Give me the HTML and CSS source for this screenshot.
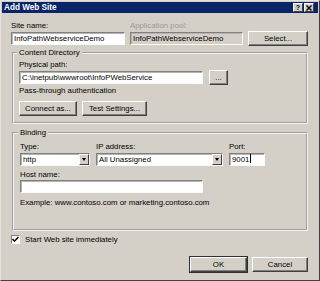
FILE: index.html
```html
<!DOCTYPE html>
<html lang="en">
<head>
  <meta charset="UTF-8" />
  <title>Add Web Site</title>
  <link rel="stylesheet" href="styles.css">
</head>
<body>
  <div class="dialog">
    <div class="titlebar">
      <span class="title">Add Web Site</span>
      <span class="tbtn help">?</span>
      <span class="tbtn close">
        <svg width="6" height="6" viewBox="0 0 6 6"><path d="M0.5 0.5 L5.5 5.5 M5.5 0.5 L0.5 5.5" stroke="#000" stroke-width="1.4"/></svg>
      </span>
    </div>

    <div class="content">
      <div class="toprow">
        <label for="siteName">Site name:</label>
        <label class="disabled-label">Application pool:</label>
        <span></span>
        <input class="field" id="siteName" type="text" value="InfoPathWebserviceDemo">
        <input class="field disabled" type="text" value="InfoPathWebserviceDemo" readonly>
        <button class="btn select-btn">Select...</button>
      </div>

      <fieldset class="group content-dir">
        <legend>Content Directory</legend>
        <label for="physPath">Physical path:</label>
        <div class="pathrow">
          <input class="field path-field" id="physPath" type="text" value="C:\inetpub\wwwroot\InfoPWebService">
          <button class="btn browse-btn">...</button>
        </div>
        <div class="note">Pass-through authentication</div>
        <div class="btnrow">
          <button class="btn connect-btn">Connect as...</button>
          <button class="btn test-btn">Test Settings...</button>
        </div>
      </fieldset>

      <fieldset class="group binding">
        <legend>Binding</legend>
        <div class="bindrow">
          <label>Type:</label>
          <label>IP address:</label>
          <label>Port:</label>
          <div class="combo"><span class="combo-text">http</span><span class="arrow"></span></div>
          <div class="combo"><span class="combo-text">All Unassigned</span><span class="arrow"></span></div>
          <div class="field port-field">9001<span class="caret"></span></div>
        </div>
        <label class="host-label" for="hostName">Host name:</label>
        <input class="field host-field" id="hostName" type="text">
        <div class="example">Example: www.contoso.com or marketing.contoso.com</div>
      </fieldset>

      <div class="checkrow">
        <span class="check">
          <svg width="7" height="7" viewBox="0 0 7 7"><path d="M0.5 3 L2.5 5.2 L6.5 1" stroke="#000" stroke-width="1.5" fill="none"/></svg>
        </span>
        <span>Start Web site immediately</span>
      </div>

      <div class="actions">
        <button class="btn default ok-btn">OK</button>
        <button class="btn cancel-btn">Cancel</button>
      </div>
    </div>
  </div>
</body>
</html>
```

FILE: styles.css
```css
body { margin: 0; font-family: "Liberation Sans", Arial, sans-serif; font-size: 7.8px; color: #000; }

.dialog {
  width: 320px; height: 281px; box-sizing: border-box;
  background: #d4d0c8; padding: 1px;
  border: 1px solid; border-color: #e4e2dc #404040 #404040 #e4e2dc;
}

.titlebar {
  height: 11px; background: #0a246a; color: #fff;
  display: flex; align-items: center; padding: 0 4px 0 2px;
  font-weight: bold; font-size: 8.2px;
}
.title { flex: 1; }
.tbtn {
  width: 10px; height: 9px; box-sizing: border-box; margin-left: 1px;
  background: #d4d0c8; color: #000; border: 1px solid; border-color: #fff #404040 #404040 #fff;
  display: flex; align-items: center; justify-content: center;
  font-size: 7px; line-height: 7px;
}

.content { padding: 8px 10px 0 9px; }

label, .note, .example { display: block; line-height: 10px; }
.disabled-label { color: #9c9a94; }

.field {
  display: block; box-sizing: border-box; width: 100%; height: 13px; margin: 0;
  padding: 0 2px; font: inherit; color: #000; background: #fff;
  border: 1px solid; border-color: #808080 #fafafa #fafafa #808080;
  box-shadow: inset 1px 1px 0 #b4b4b4; outline: none;
}
.field.disabled { background: #d4d0c8; }

.btn {
  height: 15px; box-sizing: border-box; padding: 0; margin: 0;
  font: inherit; color: #000; background: #d4d0c8;
  border: 1px solid; border-color: #fff #404040 #404040 #fff;
  box-shadow: inset -1px -1px 0 #808080;
}
.btn.default { outline: 1px solid #303030; outline-offset: 0; border-color: #fff #404040 #404040 #fff; }

.toprow {
  display: grid; grid-template-columns: 114px 113px 60px; grid-template-rows: 10px 13px;
  column-gap: 5px; row-gap: 1px;
}
.select-btn { align-self: center; }

.group {
  margin: 3px 0 0 1px; padding: 2px 6px 6px 5px;
  border: 2px groove #f4f4f4;
}
.group legend { padding: 0 2px; margin-left: -2px; line-height: 10px; }

.pathrow { display: flex; align-items: center; gap: 6px; }
.path-field { width: 184px; }
.browse-btn { width: 19px; }
.note { margin-top: 1px; }
.btnrow { display: flex; gap: 5px; margin-top: 5px; }
.connect-btn { width: 58px; }
.test-btn { width: 65px; }

.binding { margin-top: 4px; padding: 4px 6px 21px 6px; }
.bindrow {
  display: grid; grid-template-columns: 70px 127px 36px; grid-template-rows: 10px 13px;
  column-gap: 6px; row-gap: 1px;
}
.combo {
  height: 13px; box-sizing: border-box; background: #fff; display: flex; align-items: stretch;
  border: 1px solid; border-color: #808080 #fafafa #fafafa #808080;
  box-shadow: inset 1px 1px 0 #b4b4b4;
}
.combo-text { flex: 1; padding-left: 2px; line-height: 11px; }
.arrow {
  width: 10px; box-sizing: border-box; background: #d4d0c8;
  border: 1px solid; border-color: #fff #404040 #404040 #fff;
  display: flex; align-items: center; justify-content: center;
}
.arrow::before {
  content: ""; border-left: 2.5px solid transparent; border-right: 2.5px solid transparent;
  border-top: 3px solid #000;
}
.port-field { line-height: 11px; }
.caret { display: inline-block; width: 1px; height: 9px; background: #000; vertical-align: -1px; margin-left: 1px; }

.host-label { margin-top: 4px; }
.host-field { width: 183px; }
.example { margin-top: 5px; }

.checkrow { display: flex; align-items: center; gap: 5px; margin-top: 3px; height: 10px; }
.check {
  width: 9px; height: 9px; box-sizing: border-box; background: #fff;
  border: 1px solid; border-color: #808080 #fafafa #fafafa #808080;
  display: flex; align-items: center; justify-content: center;
}

.actions { display: flex; justify-content: flex-end; gap: 5px; margin-top: 13px; }
.ok-btn { width: 57px; }
.cancel-btn { width: 56px; }
```
